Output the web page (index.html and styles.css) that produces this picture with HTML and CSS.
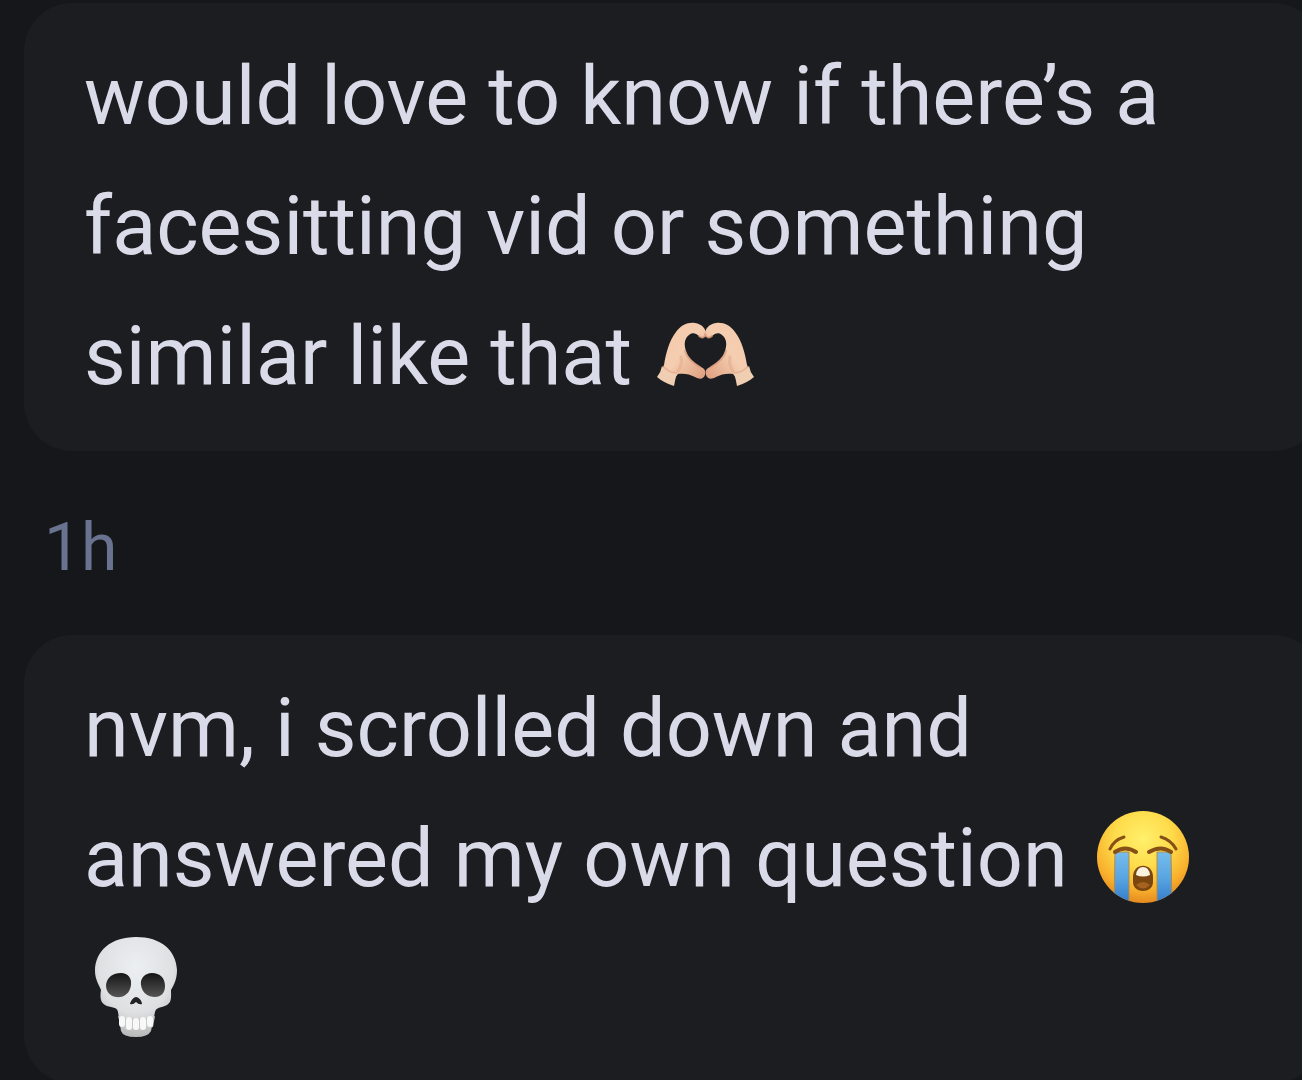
FILE: index.html
```html
<!DOCTYPE html>
<html lang="en">
<head>
<meta charset="utf-8">
<meta name="viewport" content="width=device-width, initial-scale=1">
<title>Comments</title>
<link rel="stylesheet" href="styles.css">
</head>
<body>
<main class="thread">
  <article class="bubble">
    <p class="message">would love to know if there’s a<br>facesitting vid or something<br>similar like that
      <svg class="emoji hands" viewBox="0 0 100 66" role="img" aria-label="Heart hands">
        <defs>
          <linearGradient id="skin" x1="0" y1="0" x2="1" y2="1">
            <stop offset="0" stop-color="#f3c9aa"/><stop offset=".5" stop-color="#f5cdb0"/><stop offset="1" stop-color="#dc9c7c"/>
          </linearGradient>
          <g id="hand">
            <path fill="url(#skin)" d="M8 43C10 31 13 19 20 10C25 3 32 0 39 1C46 2 50 7 50 12C49 16 46 17 43 14C40 11 36 10 33 13C28 17 28 23 30 29C32 36 38 41 45 45C49 47 50 49 49 53C47 58 43 57 39 55C34 52 27 51 22 52L18 57L5 51Z"/>
            <path fill="none" stroke="#d9997a" stroke-width="2" stroke-linecap="round" opacity=".7" d="M29 29C31 36 37 41 44 45M43 14C46 17 49 15 50 12"/>
            <path fill="none" stroke="#e2aa8a" stroke-width="3" stroke-linecap="round" opacity=".5" d="M25 35C26 40 25 45 22 49"/>
            <path fill="#efceb2" d="M6 44C10 50 15 52 21 51Q19 58 18 64Q8 61 1 55Q5 50 6 44Z"/>
            <path fill="none" stroke="#dda384" stroke-width="1.5" opacity=".6" d="M7 44Q13 51 21 51"/>
          </g>
        </defs>
        <use href="#hand"/>
        <use href="#hand" transform="matrix(-1 0 0 1 99 0)"/>
      </svg></p>
  </article>
  <time class="age">1h</time>
  <article class="bubble">
    <p class="message">nvm, i scrolled down and<br>answered my own question
      <svg class="emoji crying" viewBox="0 0 94 94" role="img" aria-label="Loudly crying face">
        <defs>
          <radialGradient id="face" cx=".5" cy=".3" r=".7">
            <stop offset="0" stop-color="#fff06b"/><stop offset=".45" stop-color="#fedb4b"/><stop offset=".8" stop-color="#f8af2c"/><stop offset="1" stop-color="#e58a20"/>
          </radialGradient>
          <linearGradient id="tear" x1="0" y1="0" x2="0" y2="1">
            <stop offset="0" stop-color="#77bdeb"/><stop offset=".5" stop-color="#58a5e2"/><stop offset="1" stop-color="#3279c8"/>
          </linearGradient>
          <clipPath id="disc"><circle cx="47" cy="47" r="46"/></clipPath>
        </defs>
        <circle cx="47" cy="47" r="46" fill="url(#face)"/>
        <g clip-path="url(#disc)">
          <path fill="url(#tear)" stroke="#b58b45" d="M19 42H33V94H18Z"/>
          <path fill="url(#tear)" stroke="#b58b45" d="M61 42H75L76 94H61Z"/>
        </g>
        <g fill="none" stroke="#865016" stroke-linecap="round">
          <path stroke-width="3" d="M14 39Q18 30 28 27M65 27Q75 30 80 39"/>
          <path stroke-width="4" d="M19 42Q29 35 40 42M53 42Q65 35 75 42"/>
        </g>
        <path fill="#7b4510" d="M37 67C37 52 57 52 57 67V72C57 84 37 84 37 72Z"/>
        <path fill="#f8f2df" d="M40 65Q41 57 47 57Q53 57 54 65Q47 68 40 65Z"/>
        <path fill="#a5631f" d="M40 75Q47 69 54 75Q47 82 40 75Z"/>
      </svg><br><svg class="emoji skull" viewBox="0 0 84 102" role="img" aria-label="Skull">
        <defs>
          <radialGradient id="bone" cx=".5" cy=".3" r=".7">
            <stop offset="0" stop-color="#eceff1"/><stop offset=".65" stop-color="#dee0e2"/><stop offset="1" stop-color="#b8b8b9"/>
          </radialGradient>
          <linearGradient id="socket" x1="0" y1="0" x2="0" y2="1">
            <stop offset="0" stop-color="#151515"/><stop offset="1" stop-color="#555"/>
          </linearGradient>
        </defs>
        <path fill="url(#bone)" d="M42 1C17 1 1 15 1 35C1 43 5 49 7 54C6 61 6 66 11 69C16 72 23 70 24 76L27 95Q29 101 42 101Q54 101 57 95L61 76C62 71 67 72 73 69C78 66 77 60 77 54C80 49 83 43 83 34C82 14 67 1 42 1Z"/>
        <path fill="url(#socket)" d="M12 49C13 41 19 37 27 37C34 37 38 42 37 49C36 58 29 62 22 61C16 60 12 56 12 49ZM47 49C46 42 51 37 58 37C66 37 71 42 71 50C71 57 67 61 61 61C54 61 48 57 47 49Z"/>
        <path fill="#222" d="M36 68C37 64 40 61 42 61C45 61 48 65 48 68Q45 69 42 66Q39 69 36 68Z"/>
        <path fill="#c8c8c8" d="M24 80Q42 85 61 80L59 91Q42 97 27 91Z"/>
        <path fill="none" stroke="#f8f8f8" stroke-width="6" stroke-linecap="round" d="M28 83V88M35 84V91M42 85V91M49 84V91M56 83V88"/>
      </svg></p>
  </article>
</main>
</body>
</html>
```
FILE: styles.css
```css
body {
  margin: 0;
  background: #16171a;
  color: #d9dbe8;
  font-family: Roboto, sans-serif;
}

.thread {
  box-sizing: border-box;
  height: 100vh;
  overflow: hidden;
  padding: 3px 0 0 24px;
}

.bubble {
  margin-right: -20px;
  padding: 29px 64px 29px 60px;
  border-radius: 48px;
  background: #1c1d20;
}

.message {
  margin: 0;
  font-size: 81px;
  line-height: 130px;
}

.age {
  display: block;
  padding: 47px 20px 37px;
  color: #69738f;
  font-size: 66px;
  line-height: 100px;
}

.emoji {
  display: inline-block;
}

.hands {
  width: 100px;
  height: 66px;
  margin-left: 4px;
  vertical-align: -4px;
}

.crying {
  width: 94px;
  height: 94px;
  margin-left: 8px;
  vertical-align: -18px;
}

.skull {
  width: 84px;
  height: 102px;
  margin-left: 10px;
  vertical-align: -22px;
}
```
